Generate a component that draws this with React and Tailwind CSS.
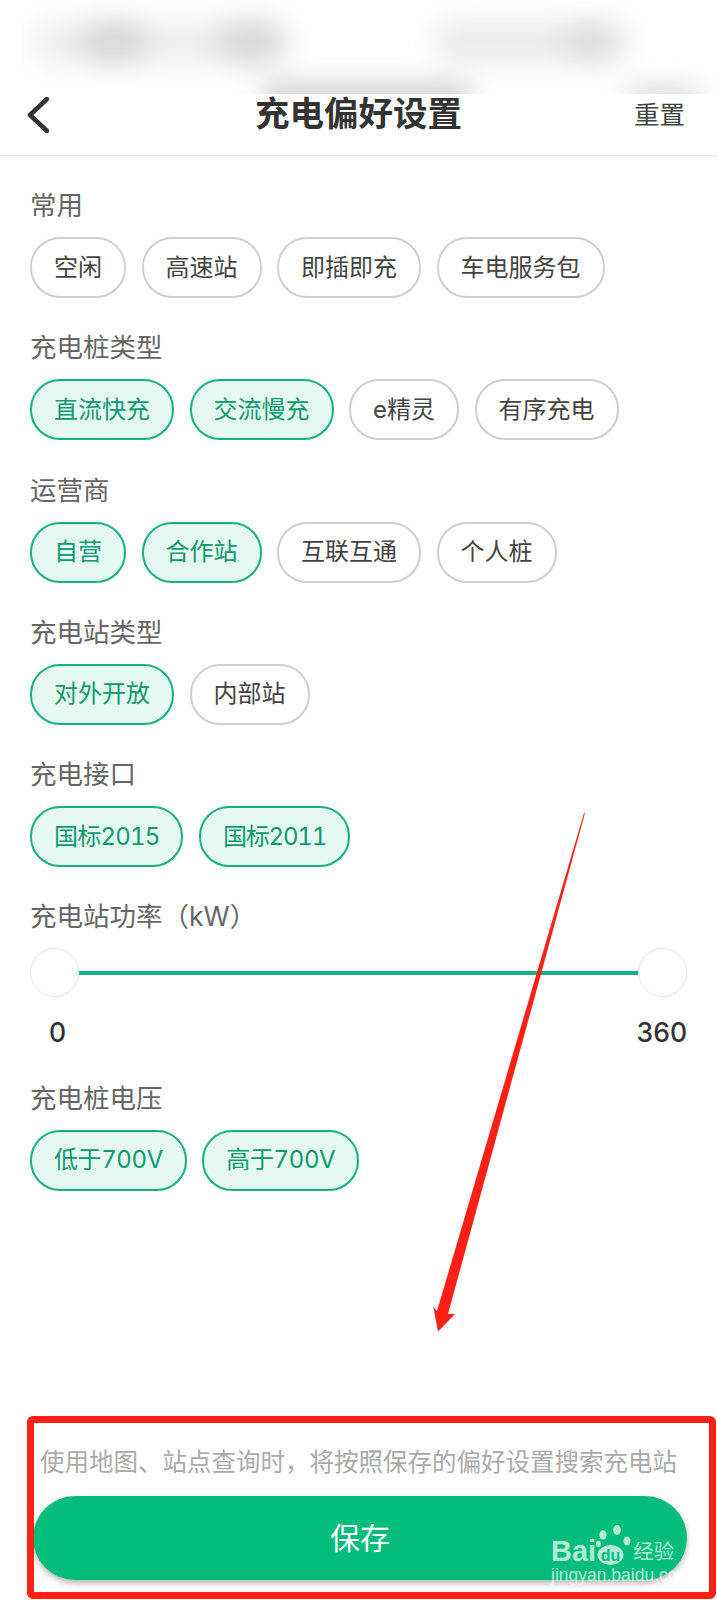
const FONT = "font-['Inter','Noto_Sans_CJK_SC',sans-serif]";

const sections = [
  {
    title: "常用",
    chips: [
      { label: "空闲" },
      { label: "高速站" },
      { label: "即插即充" },
      { label: "车电服务包" },
    ],
  },
  {
    title: "充电桩类型",
    chips: [
      { label: "直流快充", on: true },
      { label: "交流慢充", on: true },
      { label: "e精灵" },
      { label: "有序充电" },
    ],
  },
  {
    title: "运营商",
    chips: [
      { label: "自营", on: true },
      { label: "合作站", on: true },
      { label: "互联互通" },
      { label: "个人桩" },
    ],
  },
  {
    title: "充电站类型",
    chips: [{ label: "对外开放", on: true }, { label: "内部站" }],
  },
  {
    title: "充电接口",
    chips: [
      { label: "国标2015", on: true, extra: "tabular-nums tracking-[-0.8px]" },
      { label: "国标2011", on: true, extra: "tabular-nums tracking-[-1.2px]" },
    ],
  },
];

function Chip({ label, on, extra = "" }) {
  return (
    <div
      className={
        on
          ? `flex h-[61px] items-center rounded-[30px] border-2 border-[#14b088] bg-[#e6f8f2] px-[22px] text-[24px] text-[#0b9a70] ${extra}`
          : "flex h-[61px] items-center rounded-[30px] border-2 border-[#cfcfcf] bg-white px-[22px] text-[24px] text-[#444444]"
      }
    >
      {label}
    </div>
  );
}

function Section({ title, chips }) {
  return (
    <div className="mb-[34.3px]">
      <div className="h-[30px] text-[26.5px] leading-[30px] text-[#666666]">{title}</div>
      <div className="mt-[17px] flex gap-[15.5px]">
        {chips.map((c) => (
          <Chip key={c.label} {...c} />
        ))}
      </div>
    </div>
  );
}

function BlurredBar() {
  return (
    <div className="ml-[22px] h-[94px] overflow-hidden bg-white">
      <svg width="695" height="94" viewBox="22 0 695 94">
        <defs>
          <filter id="soft" x="-30%" y="-100%" width="160%" height="300%">
            <feGaussianBlur stdDeviation="13" />
          </filter>
        </defs>
        <g filter="url(#soft)">
          <rect x="36" y="20" width="252" height="46" rx="14" fill="#efefef" />
          <ellipse cx="114" cy="42" rx="36" ry="24" fill="#d9d9d9" />
          <ellipse cx="250" cy="42" rx="36" ry="24" fill="#dadada" />
          <rect x="436" y="20" width="190" height="44" rx="14" fill="#ececec" />
          <ellipse cx="590" cy="42" rx="30" ry="22" fill="#dedede" />
          <rect x="262" y="82" width="210" height="32" rx="8" fill="#d4d4d4" />
          <rect x="626" y="86" width="74" height="28" rx="8" fill="#dcdcdc" />
        </g>
      </svg>
    </div>
  );
}

function Paw() {
  return (
    <svg width="36" height="40" viewBox="0 0 36 40">
      <g fill="currentColor">
        <ellipse cx="7" cy="10" rx="3.600" ry="4.800" />
        <ellipse cx="21" cy="5" rx="3.800" ry="5" />
        <ellipse cx="31" cy="16" rx="3.400" ry="4.600" />
        <ellipse cx="2.500" cy="19" rx="2.400" ry="3.200" />
        <ellipse cx="14.500" cy="30" rx="13" ry="10" />
      </g>
      <text x="14.500" y="35.500" textAnchor="middle" fontSize="16" fontWeight="700" fill="#04bd7c" fontFamily="Liberation Sans, sans-serif">du</text>
    </svg>
  );
}

export default function App() {
  return (
    <div className={`relative flex h-[1600px] w-[717px] flex-col overflow-hidden bg-white ${FONT}`}>
      <BlurredBar />

      <header className="grid h-[62px] grid-cols-[1fr_auto_1fr] items-center border-b border-[#e8e8e8] pb-[20px] pl-[27px] pr-[32px]">
        <svg width="22" height="36" viewBox="0 0 22 36" fill="none" stroke="#333333" strokeWidth="4.500" strokeLinecap="round" strokeLinejoin="round">
          <path d="M20 2 3 18l17 16" />
        </svg>
        <h1 className="ml-[5px] text-[34.500px] font-bold leading-none text-[#333333]">充电偏好设置</h1>
        <div className="pt-[1px] text-right text-[25.500px] leading-none text-[#444444]">重置</div>
      </header>

      <main className="flex-1 pl-[30px] pr-[30px] pt-[34px]">
        {sections.map((s) => (
          <Section key={s.title} {...s} />
        ))}

        <div className="h-[30px] text-[26.5px] leading-[30px] text-[#666666]">充电站功率（kW）</div>
        <div className="mt-[17px] flex items-center">
          <div className="h-[49px] w-[49px] rounded-full border border-[#e4e4e4] bg-white" />
          <div className="h-1 flex-1 bg-[#14b088]" />
          <div className="h-[49px] w-[49px] rounded-full border border-[#e4e4e4] bg-white" />
        </div>
        <div className="mt-[18px] flex h-[34px] items-center justify-between pl-[19px] text-[26.5px] font-medium leading-none text-[#333333]">
          <span>0</span>
          <span>360</span>
        </div>

        <div className="mt-[33.5px]">
          <Section
            title="充电桩电压"
            chips={[
              { label: "低于700V", on: true, extra: "tabular-nums tracking-[-0.4px]" },
              { label: "高于700V", on: true, extra: "tabular-nums tracking-[-0.4px]" },
            ]}
          />
        </div>
      </main>

      <footer className="pb-[20px] pl-[33px] pr-[30px]">
        <p className="whitespace-nowrap pl-[7px] text-[24.500px] leading-[32px] text-[#aaaaaa]">
          使用地图、站点查询时，将按照保存的偏好设置搜索充电站
        </p>
        <button className="mt-[18px] flex h-[84px] w-full items-center justify-center rounded-[42px] bg-[#04bd7c] text-[30px] text-white shadow-[0_3px_6px_rgba(0,0,0,0.3)]">
          保存
        </button>
      </footer>

      {/* annotation layer */}
      <div className="absolute left-[27px] top-[1416px] h-[183px] w-[689px] rounded-[6px] border-[7px] border-[#fe2014]" />

      <svg className="absolute left-0 top-0" width="717" height="1600" viewBox="0 0 717 1600">
        <path d="M585 813 448 1314l7 0-17 17.500-4.700-24.500 3.700 4L584 813z" fill="#fe2014" />
      </svg>

      <div className="absolute left-[551px] top-[1525px] w-[130px] text-white/70">
        <div className="flex items-end">
          <span className="font-['Liberation_Sans',sans-serif] text-[29px] font-bold leading-[28px]">Bai</span>
          <Paw />
          <span className="ml-[1px] whitespace-nowrap text-[20.500px] leading-[26px]">经验</span>
        </div>
        <div className="mt-[2px] whitespace-nowrap font-['Liberation_Sans',sans-serif] text-[17.500px] leading-[16px]">jingyan.baidu.com</div>
      </div>
    </div>
  );
}
